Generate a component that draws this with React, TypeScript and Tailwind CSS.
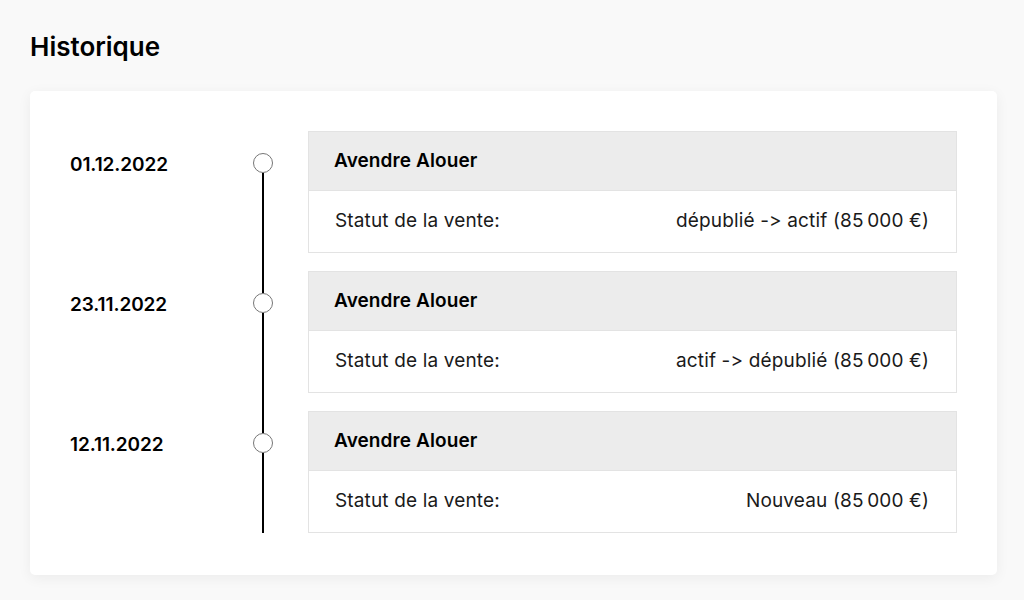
const entries = [
  { date: '01.12.2022', title: 'Avendre Alouer', label: 'Statut de la vente:', value: 'dépublié -> actif (85\u202f000 €)' },
  { date: '23.11.2022', title: 'Avendre Alouer', label: 'Statut de la vente:', value: 'actif -> dépublié (85\u202f000 €)' },
  { date: '12.11.2022', title: 'Avendre Alouer', label: 'Statut de la vente:', value: 'Nouveau (85\u202f000 €)' },
]

export default function App() {
  return (
    <div className="min-h-screen bg-[#f9f9f9] px-[30px] pt-[30px] pb-6 text-[#111] font-['Inter','Liberation_Sans',sans-serif]">
      <h1 className="text-[26px] leading-[34px] font-semibold text-black">Historique</h1>

      {/* Card */}
      <div className="mt-[27px] w-[967px] rounded-[5px] bg-white px-[40px] pt-[40px] pb-[42px] shadow-[0_3px_14px_rgba(0,0,0,0.06)]">
        {entries.map((e, i) => (
          <div key={e.date} className="flex">
            <div className="w-[174px] pt-[20px] text-[19px] leading-[28px] font-semibold tracking-[-0.1px] text-black">
              {e.date}
            </div>

            {/* Timeline */}
            <div className="w-[38px] flex flex-col items-center">
              <div className={`w-[2px] h-[22px] shrink-0 ${i > 0 ? 'bg-black' : ''}`} />
              <div className="w-[20px] h-[20px] rounded-full border border-[#767676] bg-white shrink-0" />
              <div className="w-[2px] flex-1 bg-black" />
            </div>

            <div className={`ml-[26px] flex-1 ${i < entries.length - 1 ? 'pb-[18px]' : ''}`}>
              <div className="border border-[#e3e3e3]">
                <div className="h-[59px] flex items-center px-[25px] bg-[#ececec] border-b border-[#e3e3e3] text-[19px] font-semibold tracking-[0.1px] text-black">
                  {e.title}
                </div>
                <div className="h-[61px] flex items-center justify-between pl-[26px] pr-[27px] text-[19px] tracking-[0.15px] text-[#1a1a1a]">
                  <span>{e.label}</span>
                  <span>{e.value}</span>
                </div>
              </div>
            </div>
          </div>
        ))}
      </div>
    </div>
  )
}
